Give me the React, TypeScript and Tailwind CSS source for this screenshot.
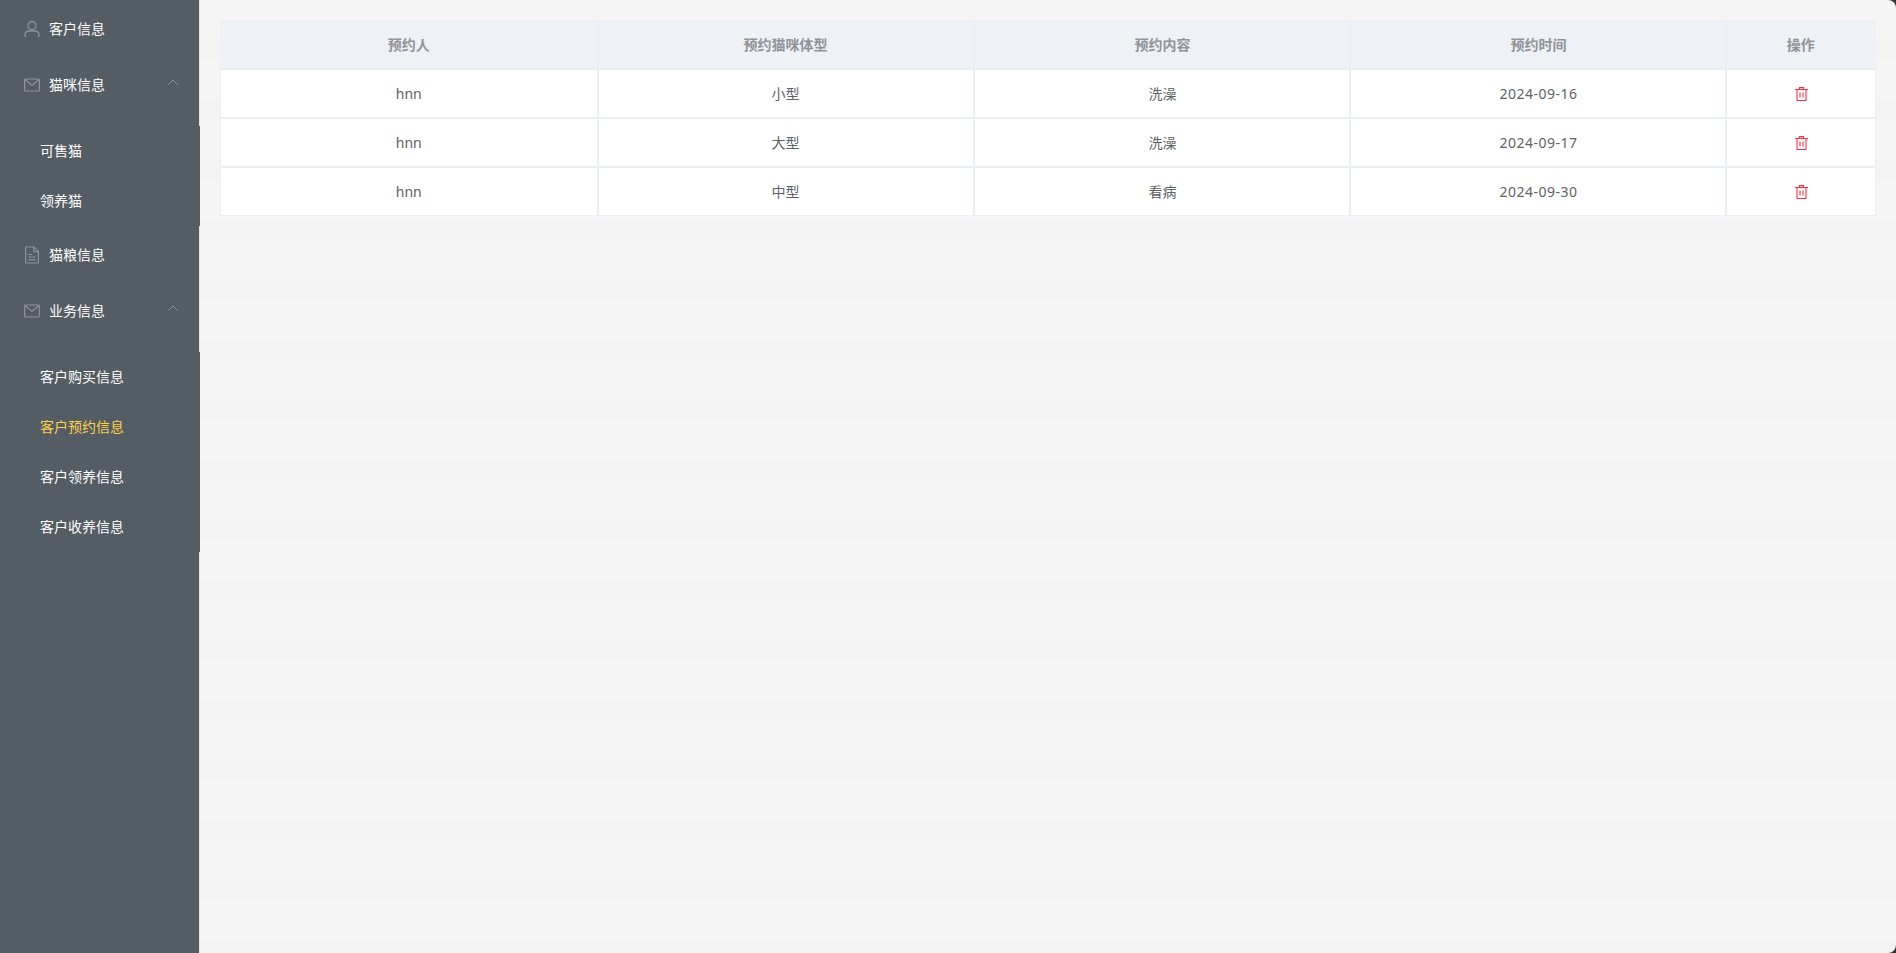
const FONT = "font-['Noto_Sans','Noto_Sans_CJK_SC',sans-serif]";

const rows = [
  { name: "hnn", size: "小型", content: "洗澡", date: "2024-09-16" },
  { name: "hnn", size: "大型", content: "洗澡", date: "2024-09-17" },
  { name: "hnn", size: "中型", content: "看病", date: "2024-09-30" },
];

function UserIcon() {
  return (
    <svg width="16" height="18" viewBox="0 0 16 18" fill="none" stroke="#909399" strokeWidth="1.3" className="shrink-0">
      <circle cx="8" cy="5.5" r="4" />
      <path d="M1 17v-2.2C1 12.6 2.8 11 5 11h6c2.200 0 4 1.600 4 3.800V17" />
    </svg>
  );
}

function MailIcon() {
  return (
    <svg width="16" height="14" viewBox="0 0 16 14" fill="none" stroke="#909399" strokeWidth="1.2" className="shrink-0">
      <rect x="0.6" y="1" width="14.800" height="12" rx="1" />
      <path d="M1 1.500 8 7.500l7-6" />
    </svg>
  );
}

function DocIcon() {
  return (
    <svg width="16" height="18" viewBox="0 0 16 18" fill="none" stroke="#909399" strokeWidth="1.2" className="shrink-0">
      <path d="M1.600 1h8.400l4.400 4.400v11.600H1.600z" />
      <path d="M9.800 1v4.600h4.600M4.500 8.500h4M4.500 11h7M4.500 13.800h7" />
    </svg>
  );
}

function Arrow() {
  return (
    <svg width="10" height="6" viewBox="0 0 10 6" fill="none" stroke="#909399" strokeWidth="1" className="ml-auto mr-[21px] mb-[6px]">
      <path d="M.5 5.500 5 1l4.500 4.500" />
    </svg>
  );
}

function TrashIcon() {
  return (
    <svg width="13" height="14" viewBox="0 0 13 14" fill="none" stroke="#ff2d3e" strokeWidth="1.100" className="mx-auto block">
      <path d="M0 2.500h13" />
      <path d="M2 2.500v11h9v-11" />
      <path d="M4.500 2V.6h4V2" />
      <path d="M5 5.500v5M8 5.500v5" />
    </svg>
  );
}

function MenuTitle({ icon, label, open }: { icon: React.ReactNode; label: string; open?: boolean }) {
  return (
    <div className="flex h-14 items-center gap-[9px] pl-6 pt-[2px] text-sm text-white">
      <span className="flex w-4 justify-center">{icon}</span>
      <span>{label}</span>
      {open && <Arrow />}
    </div>
  );
}

function SubMenu({ items, active }: { items: string[]; active?: string }) {
  return (
    <ul className="mt-[14px] -mr-px bg-[#545c64]">
      {items.map((item) => (
        <li key={item} className={`flex h-[50px] items-center pl-10 text-sm ${item === active ? "text-[#ffd04b]" : "text-white"}`}>
          {item}
        </li>
      ))}
    </ul>
  );
}

export default function App() {
  return (
    <div className={`h-[953px] bg-[#333333] ${FONT}`}>
      <div className="flex h-full overflow-hidden rounded-r-[8px] bg-[repeating-linear-gradient(180deg,#f5f5f5_0,#f5f5f5_40px,#f3f3f3_40px,#f3f3f3_60px)]">
        {/* Sidebar */}
        <aside className="w-[200px] shrink-0 border-r border-[#e6e6e6] bg-[#545c64]">
          <MenuTitle icon={<UserIcon />} label="客户信息" />
          <MenuTitle icon={<MailIcon />} label="猫咪信息" open />
          <SubMenu items={["可售猫", "领养猫"]} />
          <MenuTitle icon={<DocIcon />} label="猫粮信息" />
          <MenuTitle icon={<MailIcon />} label="业务信息" open />
          <SubMenu items={["客户购买信息", "客户预约信息", "客户领养信息", "客户收养信息"]} active="客户预约信息" />
        </aside>

        {/* Table */}
        <main className="flex-1 p-5">
          <table className="w-full table-fixed border-collapse bg-white text-center text-sm text-[#606266]">
            <thead>
              <tr className="bg-[#eef1f6] text-[#909399]">
                <th className="h-[48px] w-[377px] border-x-2 border-b-2 border-t border-l border-[#ebeef5] pt-[2px] font-semibold">预约人</th>
                <th className="w-[376px] border-x-2 border-b-2 border-t border-[#ebeef5] pt-[2px] font-semibold">预约猫咪体型</th>
                <th className="w-[376px] border-x-2 border-b-2 border-t border-[#ebeef5] pt-[2px] pl-[2px] font-semibold">预约内容</th>
                <th className="w-[376px] border-x-2 border-b-2 border-t border-[#ebeef5] pt-[2px] pl-[2px] font-semibold">预约时间</th>
                <th className="border-l-2 border-r border-b-2 border-t border-[#ebeef5] pt-[2px] font-semibold">操作</th>
              </tr>
            </thead>
            <tbody>
              {rows.map((row, i) => {
                const edge = i === rows.length - 1 ? "border-t-2 border-b" : "border-y-2";
                return (
                  <tr key={row.date}>
                    <td className={`h-[49px] border-l border-r-2 border-[#ebeef5] pt-[2px] ${edge}`}>{row.name}</td>
                    <td className={`border-x-2 border-[#ebeef5] pt-[2px] ${edge}`}>{row.size}</td>
                    <td className={`border-x-2 border-[#ebeef5] pt-[2px] pl-[2px] ${edge}`}>{row.content}</td>
                    <td className={`border-x-2 border-[#ebeef5] pt-[2px] pl-[2px] tracking-[0.5px] ${edge}`}>{row.date}</td>
                    <td className={`border-l-2 border-r border-[#ebeef5] pt-[1px] pl-[2px] ${edge}`}>
                      <TrashIcon />
                    </td>
                  </tr>
                );
              })}
            </tbody>
          </table>
        </main>
      </div>
    </div>
  );
}
